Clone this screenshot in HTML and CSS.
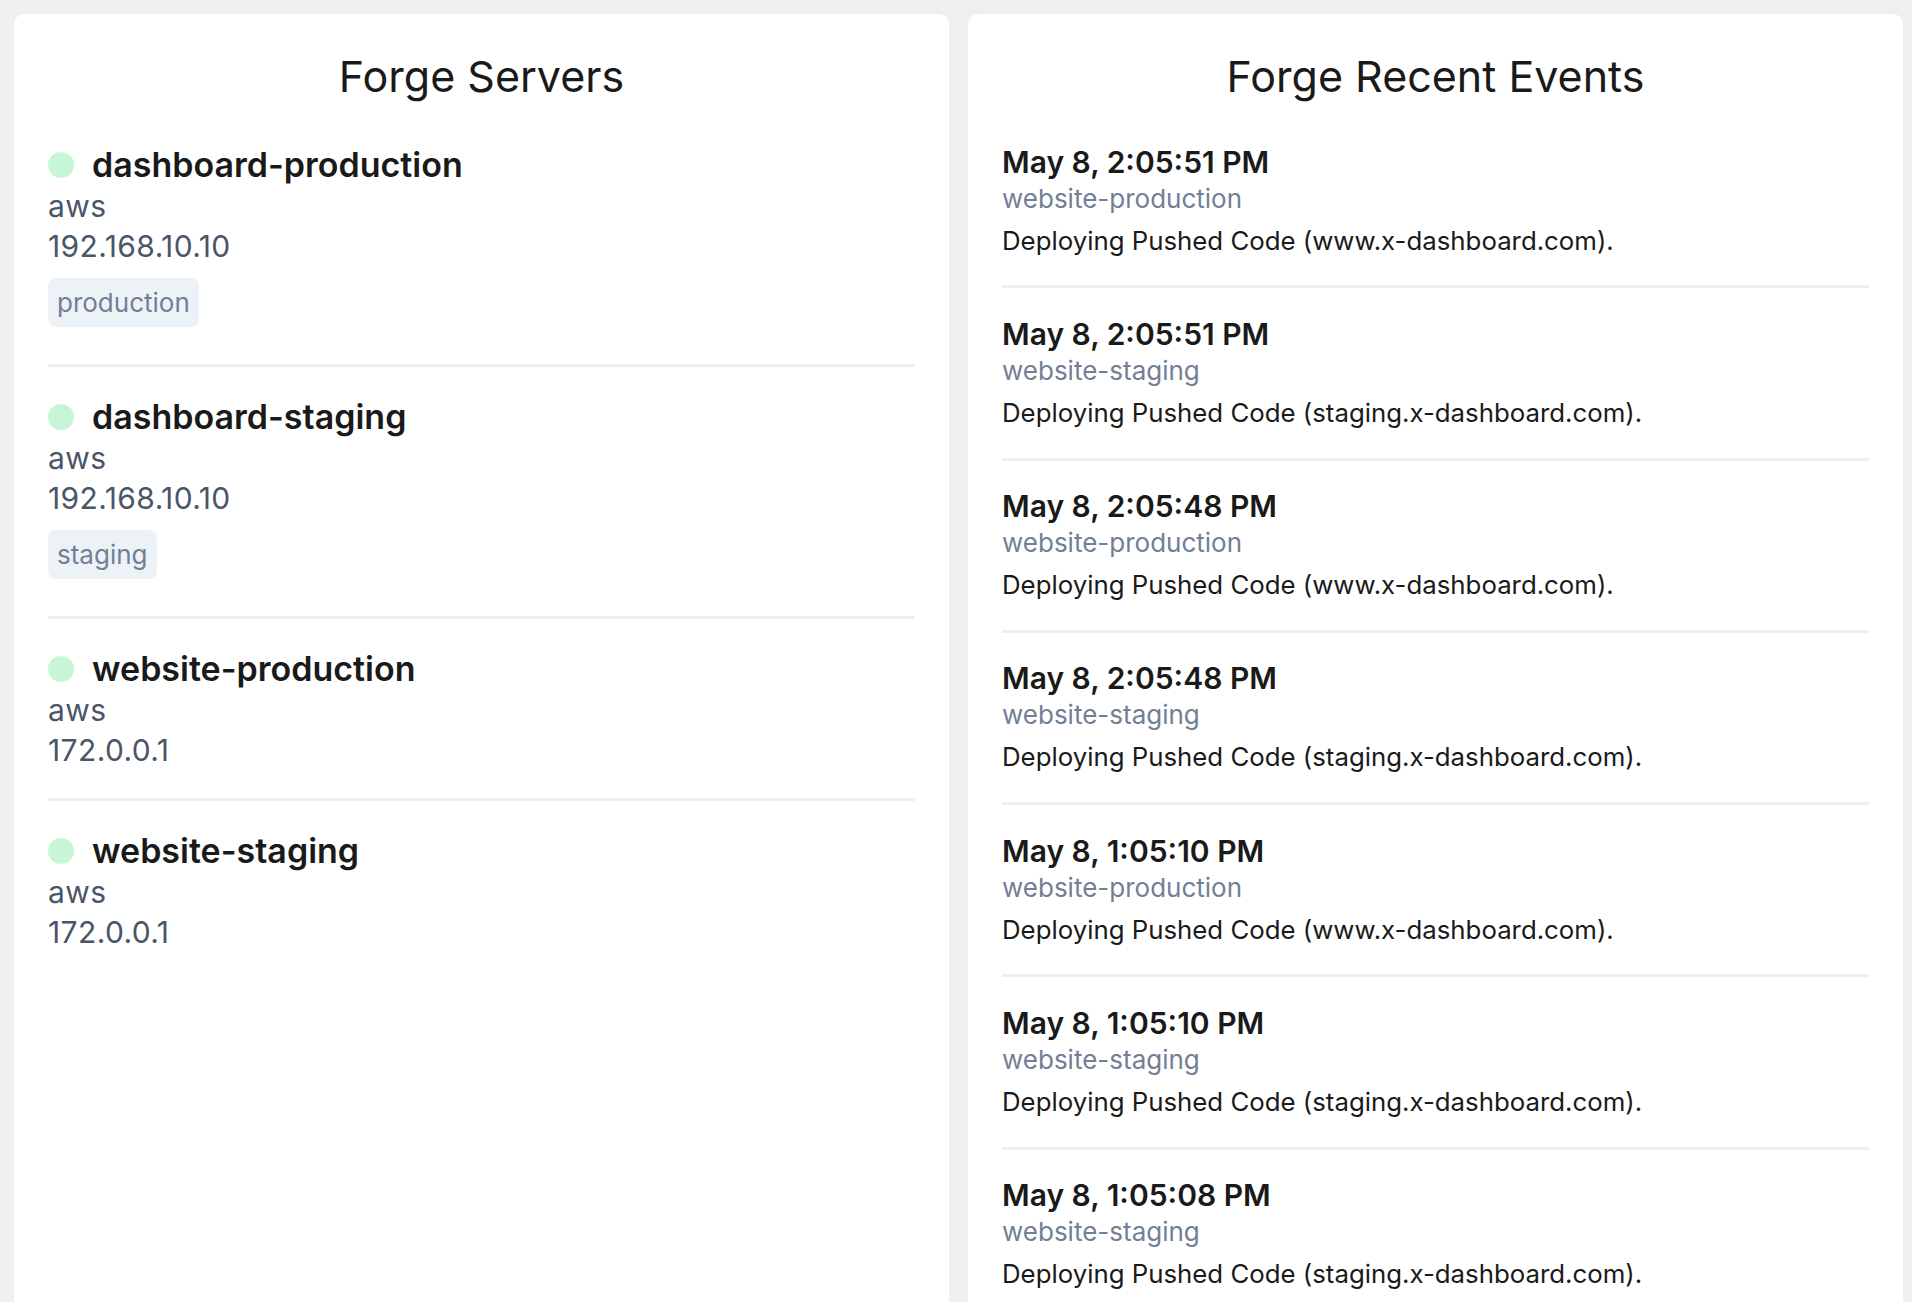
FILE: index.html
```html
<!DOCTYPE html>
<html lang="en">
<head>
<meta charset="utf-8">
<title>Forge Dashboard</title>
<link rel="stylesheet" href="styles.css">
</head>
<body>
<main class="dashboard">
  <section class="tile">
    <h1 class="tile-title">Forge Servers</h1>
    <ul class="list">
      <li class="server">
        <div class="server-head"><span class="dot"></span><span class="server-name">dashboard-production</span></div>
        <div class="server-meta">aws</div>
        <div class="server-meta">192.168.10.10</div>
        <span class="tag">production</span>
      </li>
      <li class="server">
        <div class="server-head"><span class="dot"></span><span class="server-name">dashboard-staging</span></div>
        <div class="server-meta">aws</div>
        <div class="server-meta">192.168.10.10</div>
        <span class="tag">staging</span>
      </li>
      <li class="server">
        <div class="server-head"><span class="dot"></span><span class="server-name">website-production</span></div>
        <div class="server-meta">aws</div>
        <div class="server-meta">172.0.0.1</div>
      </li>
      <li class="server last">
        <div class="server-head"><span class="dot"></span><span class="server-name">website-staging</span></div>
        <div class="server-meta">aws</div>
        <div class="server-meta">172.0.0.1</div>
      </li>
    </ul>
  </section>
  <section class="tile">
    <h1 class="tile-title">Forge Recent Events</h1>
    <ul class="list events">
      <li class="event">
        <div class="event-date">May 8, 2:05:51 PM</div>
        <div class="event-server">website-production</div>
        <div class="event-desc">Deploying Pushed Code (www.x-dashboard.com).</div>
      </li>
      <li class="event">
        <div class="event-date">May 8, 2:05:51 PM</div>
        <div class="event-server">website-staging</div>
        <div class="event-desc">Deploying Pushed Code (staging.x-dashboard.com).</div>
      </li>
      <li class="event">
        <div class="event-date">May 8, 2:05:48 PM</div>
        <div class="event-server">website-production</div>
        <div class="event-desc">Deploying Pushed Code (www.x-dashboard.com).</div>
      </li>
      <li class="event">
        <div class="event-date">May 8, 2:05:48 PM</div>
        <div class="event-server">website-staging</div>
        <div class="event-desc">Deploying Pushed Code (staging.x-dashboard.com).</div>
      </li>
      <li class="event">
        <div class="event-date">May 8, 1:05:10 PM</div>
        <div class="event-server">website-production</div>
        <div class="event-desc">Deploying Pushed Code (www.x-dashboard.com).</div>
      </li>
      <li class="event">
        <div class="event-date">May 8, 1:05:10 PM</div>
        <div class="event-server">website-staging</div>
        <div class="event-desc">Deploying Pushed Code (staging.x-dashboard.com).</div>
      </li>
      <li class="event">
        <div class="event-date">May 8, 1:05:08 PM</div>
        <div class="event-server">website-staging</div>
        <div class="event-desc">Deploying Pushed Code (staging.x-dashboard.com).</div>
      </li>
    </ul>
  </section>
</main>
</body>
</html>
```

FILE: styles.css
```css
* { box-sizing: border-box; }

html, body {
  margin: 0;
  height: 100%;
  overflow: hidden;
}

body {
  background: #efefef;
  font-family: Inter, "Noto Sans", sans-serif;
  font-optical-sizing: none;
  color: #1a202c;
}

.dashboard {
  display: grid;
  grid-template-columns: 935px 935px;
  column-gap: 19px;
  padding: 14px 9px 0 14px;
  height: 100%;
}

.tile {
  background: #ffffff;
  border-radius: 10px;
  padding: 36px 34px 0 34px;
  min-height: 1400px;
}

.tile-title {
  margin: 0;
  font-size: 43px;
  line-height: 52px;
  font-weight: 400;
  text-align: center;
  color: #1a1a1a;
}

.list {
  list-style: none;
  margin: 13px 0 0 0;
  padding: 0;
}

.list.events { margin-top: 14px; }

.server {
  padding: 29px 0 28px 0;
  border-bottom: 3px solid #efefef;
}

.server.last { border-bottom: none; }

.server-head {
  display: flex;
  align-items: center;
  gap: 18px;
  height: 42px;
}

.dot {
  width: 26px;
  height: 26px;
  border-radius: 50%;
  background: #c6f6d5;
  flex: none;
}

.server-name {
  font-size: 34px;
  line-height: 42px;
  font-weight: 600;
  color: #1a1a1a;
}

.server-meta {
  font-size: 30px;
  line-height: 40px;
  letter-spacing: 0.4px;
  color: #4a5568;
}

.tag {
  display: inline-block;
  margin: 12px 0 9px 0;
  height: 49px;
  line-height: 49px;
  padding: 0 9px;
  border-radius: 8px;
  background: #edf2f7;
  color: #718096;
  font-size: 26px;
}

.event {
  padding: 26.5px 0 26.8px 0;
  border-bottom: 3px solid #efefef;
}

.event-date {
  font-size: 30px;
  line-height: 38px;
  font-weight: 600;
  color: #1a1a1a;
}

.event-server {
  font-size: 26px;
  line-height: 36px;
  color: #718096;
}

.event-desc {
  margin-top: 6px;
  font-size: 25.8px;
  line-height: 36px;
  color: #1a1a1a;
}
```
